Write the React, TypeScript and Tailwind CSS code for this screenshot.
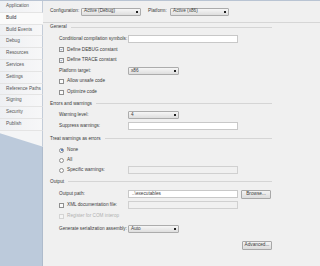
import React from "react";

const tabs = [
  "Application",
  "Build",
  "Build Events",
  "Debug",
  "Resources",
  "Services",
  "Settings",
  "Reference Paths",
  "Signing",
  "Security",
  "Publish",
];

function Check({ checked = false, disabled = false }: { checked?: boolean; disabled?: boolean }) {
  return (
    <span
      className={`flex h-[5px] w-[5px] shrink-0 items-center justify-center border ${
        disabled ? "border-[#d4d4d4] bg-[#f4f4f4]" : "border-[#8f8f8f] bg-[#fafafa]"
      }`}
    >
      {checked && (
        <svg viewBox="0 0 5 5" className="h-[5px] w-[5px]">
          <path d="M1 2.6 L2 3.6 L4 1.2" stroke="#2b4f8c" strokeWidth="0.9" fill="none" />
        </svg>
      )}
    </span>
  );
}

function Radio({ checked = false }: { checked?: boolean }) {
  return (
    <span className="flex h-[5px] w-[5px] shrink-0 items-center justify-center rounded-full border border-[#8f8f8f] bg-[#fafafa]">
      {checked && <span className="h-[2px] w-[2px] rounded-full bg-[#2f5fb0]" />}
    </span>
  );
}

function Select({ value, w }: { value: string; w: string }) {
  return (
    <div
      className={`flex h-[8px] ${w} shrink-0 items-center justify-between rounded-[1px] border border-[#acacac] bg-gradient-to-b from-[#f6f6f6] to-[#dedede] pl-[2px] pr-[2px]`}
    >
      <span className="leading-none">{value}</span>
      <span className="h-[2px] w-[2px] bg-[#222]" />
    </div>
  );
}

function TextBox({ value = "", disabled = false }: { value?: string; disabled?: boolean }) {
  return (
    <div
      className={`flex h-[8px] w-[110px] shrink-0 items-center border pl-[3px] leading-none ${
        disabled ? "border-[#d0d0d0] bg-[#f0f0f0]" : "border-[#c8c8c8] bg-white"
      }`}
    >
      {value}
    </div>
  );
}

function Button({ label }: { label: string }) {
  return (
    <div className="flex h-[9px] w-[30px] items-center justify-center rounded-[1px] border border-[#a8a8a8] bg-gradient-to-b from-[#f4f4f4] to-[#dcdcdc] leading-none">
      {label}
    </div>
  );
}

function Header({ title, className = "" }: { title: string; className?: string }) {
  return (
    <div className={`flex h-[8px] items-center gap-[4px] pl-[7px] ${className}`}>
      <span className="leading-none">{title}</span>
      <span className="h-px flex-1 bg-[#d5d5d5]" />
    </div>
  );
}

function Row({
  label,
  children,
  h = "h-[10.6px]",
}: {
  label: React.ReactNode;
  children?: React.ReactNode;
  h?: string;
}) {
  return (
    <div className={`flex ${h} items-center pl-[16px]`}>
      <div className="w-[69px] shrink-0 leading-none">{label}</div>
      {children}
    </div>
  );
}

function Opt({ box, text, dim = false }: { box: React.ReactNode; text: string; dim?: boolean }) {
  return (
    <div className="flex items-center gap-[3px]">
      {box}
      <span className={`leading-none ${dim ? "text-[#b0b0b0]" : ""}`}>{text}</span>
    </div>
  );
}

export default function App() {
  return (
    <div
      className="flex h-[266px] w-[320px] overflow-hidden whitespace-nowrap border-t border-[#b9c4d3] bg-[#f0f0f0] text-[4.7px] text-[#3a3a3a]"
      style={{ fontFamily: '"Liberation Sans", Arial, sans-serif' }}
    >
      {/* side tabs */}
      <div className="flex w-[43px] flex-col bg-[#bccadb]">
        <div className="flex flex-col">
          {tabs.map((t) => (
            <div
              key={t}
              className={`flex h-[11.8px] items-center border-b border-b-[#e4e4e4] pl-[6px] leading-none ${
                t === "Build"
                  ? "bg-[#fafafa] text-[#333]"
                  : "border-r border-r-[#c3ccd8] bg-gradient-to-r from-[#eef0f3] to-[#f7f7f8] text-[#555]"
              }`}
            >
              {t}
            </div>
          ))}
        </div>
        <div className="h-[16px] border-r border-[#c3ccd8] bg-[#f4f5f6] [clip-path:polygon(0_0,100%_0,100%_100%,0_15%)]" />
        <div className="flex-1 border-r border-[#aebbcc]" />
      </div>

      {/* main pane */}
      <div className="flex flex-1 flex-col">
        <div className="flex h-[22px] items-center border-b border-[#d6d6d6] pl-[7px]">
          <span className="w-[31px] leading-none">Configuration:</span>
          <Select value="Active (Debug)" w="w-[60px]" />
          <span className="ml-[7px] w-[22px] leading-none">Platform:</span>
          <Select value="Active (x86)" w="w-[59px]" />
        </div>

        <div className="flex w-[229px] flex-col">
          <Header title="General" />
          <div className="h-[3px]" />
          <Row label="Conditional compilation symbols:">
            <TextBox />
          </Row>
          <Row label={<Opt box={<Check checked />} text="Define DEBUG constant" />} />
          <Row label={<Opt box={<Check checked />} text="Define TRACE constant" />} />
          <Row label="Platform target:">
            <Select value="x86" w="w-[51px]" />
          </Row>
          <Row label={<Opt box={<Check />} text="Allow unsafe code" />} />
          <Row label={<Opt box={<Check />} text="Optimize code" />} />

          <Header title="Errors and warnings" className="mt-[2.4px]" />
          <div className="h-[1.5px]" />
          <Row label="Warning level:" h="h-[11px]">
            <Select value="4" w="w-[51px]" />
          </Row>
          <Row label="Suppress warnings:" h="h-[12px]">
            <TextBox />
          </Row>

          <Header title="Treat warnings as errors" className="mt-[2.5px]" />
          <div className="h-[2.5px]" />
          <Row label={<Opt box={<Radio checked />} text="None" />} h="h-[10px]" />
          <Row label={<Opt box={<Radio />} text="All" />} h="h-[10px]" />
          <Row label={<Opt box={<Radio />} text="Specific warnings:" />} h="h-[10px]">
            <TextBox disabled />
          </Row>

          <Header title="Output" className="mt-[2.5px]" />
          <div className="h-[3px]" />
          <Row label="Output path:" h="h-[11px]">
            <TextBox value="..\executables" />
            <div className="ml-[3px]">
              <Button label="Browse..." />
            </div>
          </Row>
          <Row label={<Opt box={<Check />} text="XML documentation file:" />} h="h-[11px]">
            <TextBox disabled />
          </Row>
          <Row label={<Opt box={<Check disabled />} text="Register for COM interop" dim />} h="h-[11px]" />
          <div className="h-[2px]" />
          <Row label="Generate serialization assembly:" h="h-[10px]">
            <Select value="Auto" w="w-[51px]" />
          </Row>
          <div className="flex justify-end pt-[7px]">
            <Button label="Advanced..." />
          </div>
        </div>
      </div>
    </div>
  );
}
